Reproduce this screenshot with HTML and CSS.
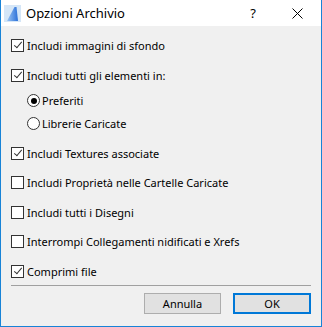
FILE: index.html
```html
<!DOCTYPE html>
<html>
<head>
<meta charset="utf-8">
<link rel="stylesheet" href="styles.css">
</head>
<body>
<div class="window">
  <div class="titlebar">
    <svg class="app-icon" width="17" height="17" viewBox="0 0 17 17">
      <defs>
        <linearGradient id="sail" x1="0" y1="0" x2="1" y2="0">
          <stop offset="0" stop-color="#9cc6f5"/>
          <stop offset="1" stop-color="#2a6fd8"/>
        </linearGradient>
      </defs>
      <rect x="0" y="0" width="17" height="17" fill="#d5e6f7"/>
      <path d="M3 16 L10.5 2 L12.5 2 L14 16 Z" fill="url(#sail)"/>
    </svg>
    <span class="title">Opzioni Archivio</span>
    <span class="help">?</span>
    <svg class="close" width="11" height="11" viewBox="0 0 11 11">
      <path d="M0.5 0.5 L10.5 10.5 M10.5 0.5 L0.5 10.5" stroke="#000" stroke-width="1" fill="none"/>
    </svg>
  </div>
  <div class="body">
    <div class="options">
      <label class="opt r1"><span class="cb checked"></span>Includi immagini di sfondo</label>
      <label class="opt r2"><span class="cb checked"></span>Includi tutti gli elementi in:</label>
      <label class="opt radio r3"><span class="rb on"></span>Preferiti</label>
      <label class="opt radio r4"><span class="rb"></span>Librerie Caricate</label>
      <label class="opt r5"><span class="cb checked"></span>Includi Textures associate</label>
      <label class="opt r6"><span class="cb"></span>Includi Proprietà nelle Cartelle Caricate</label>
      <label class="opt r7"><span class="cb"></span>Includi tutti i Disegni</label>
      <label class="opt r8"><span class="cb"></span>Interrompi Collegamenti nidificati e Xrefs</label>
      <label class="opt r9"><span class="cb checked"></span>Comprimi file</label>
    </div>
    <div class="sep"></div>
    <div class="buttons">
      <button class="btn">Annulla</button>
      <button class="btn default">OK</button>
    </div>
  </div>
</div>
</body>
</html>
```
FILE: styles.css
```css
html, body {
  margin: 0;
  padding: 0;
  background: #f0f0f0;
}
.window {
  width: 322px;
  height: 327px;
  box-sizing: border-box;
  border: 1px solid #1883d7;
  border-top: none;
  background: #f0f0f0;
  font-family: "Noto Sans", "Open Sans", sans-serif;
  font-size: 11px;
  color: #000;
  display: flex;
  flex-direction: column;
}
.titlebar {
  height: 26px;
  background: #fff;
  display: flex;
  align-items: center;
  padding-left: 3px;
  flex: none;
}
.app-icon {
  flex: none;
}
.title {
  margin-left: 5px;
  font-size: 13px;
  flex: 1;
}
.help {
  font-size: 13px;
  margin-right: 36px;
}
.close {
  margin-right: 18px;
}
.body {
  flex: 1;
  padding: 13px 10px 0 10px;
  display: flex;
  flex-direction: column;
}
.options {
  display: flex;
  flex-direction: column;
}
.opt {
  display: flex;
  align-items: center;
  height: 13px;
  line-height: 13px;
  white-space: nowrap;
}
.r2, .r5, .r7, .r9 { margin-top: 17px; }
.r6, .r8 { margin-top: 16px; }
.r3 { margin-top: 12px; }
.r4 { margin-top: 10px; }
.radio { padding-left: 16px; }
.cb {
  width: 13px;
  height: 13px;
  box-sizing: border-box;
  border: 1px solid #333;
  background: #fff;
  margin-right: 3px;
  flex: none;
  position: relative;
}
.cb.checked::after {
  content: "";
  position: absolute;
  left: 4px;
  top: 0px;
  width: 3px;
  height: 7px;
  border-right: 1px solid #333;
  border-bottom: 1px solid #333;
  transform: rotate(40deg);
}
.rb {
  width: 13px;
  height: 13px;
  box-sizing: border-box;
  border: 1px solid #333;
  border-radius: 50%;
  background: #fff;
  margin-right: 2px;
  flex: none;
  position: relative;
}
.rb.on::after {
  content: "";
  position: absolute;
  left: 2.5px;
  top: 2.5px;
  width: 6px;
  height: 6px;
  border-radius: 50%;
  background: #000;
}
.sep {
  height: 1px;
  background: #a0a0a0;
  margin-top: 7px;
}
.buttons {
  display: flex;
  justify-content: flex-end;
  gap: 12px;
  margin-top: 7px;
}
.btn {
  width: 77px;
  height: 21px;
  box-sizing: border-box;
  border: 1px solid #adadad;
  background: #e1e1e1;
  font-family: inherit;
  font-size: 11px;
  color: #000;
  padding: 0;
  margin: 0;
}
.btn.default {
  width: 78px;
  border: 2px solid #0078d7;
}
```
